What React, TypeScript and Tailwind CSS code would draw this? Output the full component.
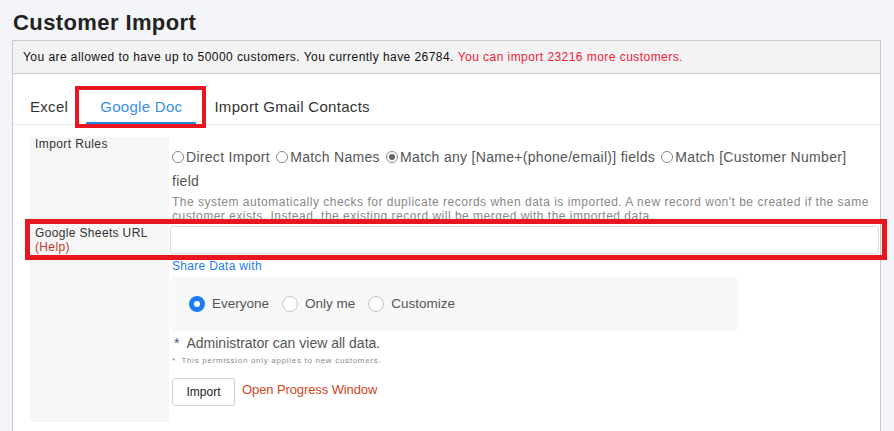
import React from "react";

function SmallRadio({ checked = false }: { checked?: boolean }) {
  return (
    <span className="relative ml-[2px] mr-[2px] inline-block h-[12px] w-[12px] rounded-full border border-[#8a8a8a] bg-white align-[-1px] first:ml-0">
      {checked && <span className="absolute left-[2px] top-[2px] h-[6px] w-[6px] rounded-full bg-[#666]" />}
    </span>
  );
}

function ShareRadio({ label, checked = false }: { label: string; checked?: boolean }) {
  return (
    <label className="flex items-center gap-[7px]">
      {checked ? (
        <span className="h-[16px] w-[16px] rounded-full border-[5px] border-[#1a7ef0] bg-white" />
      ) : (
        <span className="h-[16px] w-[16px] rounded-full border border-[#c4c4c4] bg-white" />
      )}
      <span className="text-[13.5px] text-[#555]">{label}</span>
    </label>
  );
}

export default function App() {
  return (
    <div className="min-h-screen bg-[#f4f5f8] font-['Liberation_Sans',Arial,sans-serif]">
      <h1 className="pl-[13px] pt-[10px] text-[22px] font-bold leading-[25px] tracking-[0.4px] text-[#222]">Customer Import</h1>

      <div className="ml-[12px] mt-[5px] w-[869px]">
        {/* Notice */}
        <div className="flex h-[34px] items-center border border-[#c9c9c9] bg-[#f3f3f3] pl-[10px] text-[12px] tracking-[0.45px] text-[#111]">
          You are allowed to have up to 50000 customers. You currently have 26784.&nbsp;
          <span className="text-[#f0203a]">You can import 23216 more customers.</span>
        </div>

        {/* Panel */}
        <div className="relative min-h-[358px] border-x border-[#c9c9c9] bg-white pt-[16px]">
          {/* Tabs */}
          <div className="flex gap-[4px] border-b border-[#ebebeb] pl-[3px] tracking-[0.3px]">
            <div className="flex h-[34px] items-center px-[14px] text-[15px] text-[#333]">Excel</div>
            <div className="flex h-[34px] items-center border-b-2 border-[#1e88e5] px-[14px] pt-[2px] text-[15px] text-[#3a8ee6]">Google Doc</div>
            <div className="flex h-[34px] items-center px-[14px] text-[15px] text-[#333]">Import Gmail Contacts</div>
          </div>

          {/* Form */}
          <div className="ml-[17px] mr-[1px] mt-[12px] grid grid-cols-[139px_1fr] gap-x-[1px]">
            {/* Import rules */}
            <div className="bg-[#f6f6f6] pl-[5px] text-[12px] leading-[14px] tracking-[0.4px] text-[#333]">Import Rules</div>
            <div className="h-[87px] overflow-hidden pl-[2px] pt-[8px]">
              <div className="text-[14px] leading-[24px] tracking-[0.3px] text-[#555]">
                <SmallRadio />Direct Import <SmallRadio />Match Names <SmallRadio checked />Match any [Name+(phone/email)] fields{" "}
                <SmallRadio />Match [Customer Number]
                <br />
                field
              </div>
              <p className="mt-[2px] pr-[10px] text-[12px] leading-[14px] tracking-[0.5px] text-[#888]">
                The system automatically checks for duplicate records when data is imported. A new record won't be created if the same customer exists. Instead, the existing record will be merged with the imported data.
              </p>
            </div>

            {/* Sheets URL */}
            <div className="bg-[#f6f6f6] pl-[5px] pt-[2px] text-[12px] leading-[14px] tracking-[0.35px] text-[#333]">
              Google Sheets URL
              <div className="text-[#c0392b]">(Help)</div>
            </div>
            <div className="pb-[2px] pt-[2px]">
              <input className="block h-[28px] w-full rounded-[3px] border border-[#dcdcdc] bg-white px-2 text-[13px] outline-none" />
            </div>

            {/* Sharing */}
            <div className="bg-[#f6f6f6]" />
            <div className="pb-[16px] pt-[3px]">
              <div className="pl-[2px] text-[12px] leading-[14px] tracking-[0.3px] text-[#1a7ef0]">Share Data with</div>
              <div className="mt-[4px] flex h-[54px] w-[568px] items-center gap-[13px] rounded-[4px] bg-[#f8f8f8] pl-[19px]">
                <ShareRadio label="Everyone" checked />
                <ShareRadio label="Only me" />
                <ShareRadio label="Customize" />
              </div>
              <div className="mt-[3px] pl-[4px] text-[14px] leading-[18px] text-[#555]">*&nbsp; Administrator can view all data.</div>
              <div className="mt-[3px] pl-[2px] text-[8px] leading-[12px] tracking-[0.7px] text-[#8a8a8a]">*&nbsp; This permission only applies to new customers.</div>
              <div className="mt-[11px] flex items-center gap-[7px] pl-[2px]">
                <button className="h-[28px] w-[63px] rounded-[3px] border border-[#cfcfcf] bg-white text-[12px] text-[#222]">Import</button>
                <span className="-mt-[4px] text-[13px] tracking-[-0.1px] text-[#d2461f]">Open Progress Window</span>
              </div>
            </div>
          </div>

          {/* annotation boxes */}
          <div className="pointer-events-none absolute left-[62px] top-[12px] h-[42px] w-[131px] border-4 border-[#e8161f]" />
          <div className="pointer-events-none absolute left-[12px] top-[145px] h-[41px] w-[862px] border-[5px] border-[#e8161f]" />
        </div>
      </div>
    </div>
  );
}
